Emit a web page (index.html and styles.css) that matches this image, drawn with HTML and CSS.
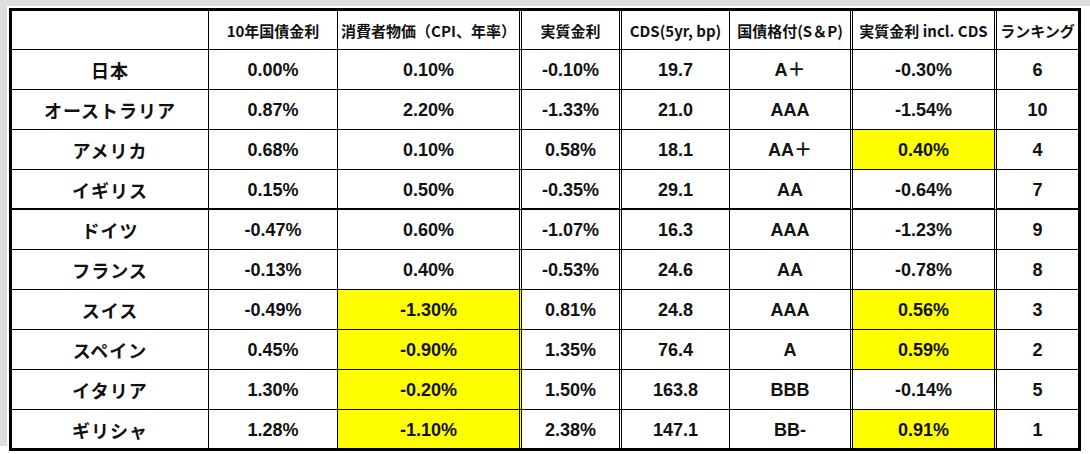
FILE: index.html
```html
<!DOCTYPE html>
<html lang="ja">
<head>
<meta charset="utf-8">
<title>実質金利比較</title>
<link rel="stylesheet" href="styles.css">
</head>
<body>
<div class="frame">
  <div class="sheet">
    <div class="cell hd"></div>
    <div class="cell hd">10年国債金利</div>
    <div class="cell hd dbl">消費者物価（CPI、年率）</div>
    <div class="cell hd dbl">実質金利</div>
    <div class="cell hd">CDS(5yr, bp)</div>
    <div class="cell hd dbl">国債格付(S＆P)</div>
    <div class="cell hd dbl">実質金利 incl. CDS</div>
    <div class="cell hd end">ランキング</div>

    <div class="cell name">日本</div>
    <div class="cell">0.00%</div>
    <div class="cell dbl">0.10%</div>
    <div class="cell dbl">-0.10%</div>
    <div class="cell">19.7</div>
    <div class="cell dbl">A＋</div>
    <div class="cell dbl">-0.30%</div>
    <div class="cell end">6</div>

    <div class="cell name">オーストラリア</div>
    <div class="cell">0.87%</div>
    <div class="cell dbl">2.20%</div>
    <div class="cell dbl">-1.33%</div>
    <div class="cell">21.0</div>
    <div class="cell dbl">AAA</div>
    <div class="cell dbl">-1.54%</div>
    <div class="cell end">10</div>

    <div class="cell name">アメリカ</div>
    <div class="cell">0.68%</div>
    <div class="cell dbl">0.10%</div>
    <div class="cell dbl">0.58%</div>
    <div class="cell">18.1</div>
    <div class="cell dbl">AA＋</div>
    <div class="cell dbl yl">0.40%</div>
    <div class="cell end">4</div>

    <div class="cell name thick">イギリス</div>
    <div class="cell thick">0.15%</div>
    <div class="cell dbl thick">0.50%</div>
    <div class="cell dbl thick">-0.35%</div>
    <div class="cell thick">29.1</div>
    <div class="cell dbl thick">AA</div>
    <div class="cell dbl thick">-0.64%</div>
    <div class="cell end thick">7</div>

    <div class="cell name">ドイツ</div>
    <div class="cell">-0.47%</div>
    <div class="cell dbl">0.60%</div>
    <div class="cell dbl">-1.07%</div>
    <div class="cell">16.3</div>
    <div class="cell dbl">AAA</div>
    <div class="cell dbl">-1.23%</div>
    <div class="cell end">9</div>

    <div class="cell name">フランス</div>
    <div class="cell">-0.13%</div>
    <div class="cell dbl">0.40%</div>
    <div class="cell dbl">-0.53%</div>
    <div class="cell">24.6</div>
    <div class="cell dbl">AA</div>
    <div class="cell dbl">-0.78%</div>
    <div class="cell end">8</div>

    <div class="cell name">スイス</div>
    <div class="cell">-0.49%</div>
    <div class="cell dbl yl">-1.30%</div>
    <div class="cell dbl">0.81%</div>
    <div class="cell">24.8</div>
    <div class="cell dbl">AAA</div>
    <div class="cell dbl yl">0.56%</div>
    <div class="cell end">3</div>

    <div class="cell name">スペイン</div>
    <div class="cell">0.45%</div>
    <div class="cell dbl yl">-0.90%</div>
    <div class="cell dbl">1.35%</div>
    <div class="cell">76.4</div>
    <div class="cell dbl">A</div>
    <div class="cell dbl yl">0.59%</div>
    <div class="cell end">2</div>

    <div class="cell name">イタリア</div>
    <div class="cell">1.30%</div>
    <div class="cell dbl yl">-0.20%</div>
    <div class="cell dbl">1.50%</div>
    <div class="cell">163.8</div>
    <div class="cell dbl">BBB</div>
    <div class="cell dbl">-0.14%</div>
    <div class="cell end">5</div>

    <div class="cell name last">ギリシャ</div>
    <div class="cell last">1.28%</div>
    <div class="cell dbl yl last">-1.10%</div>
    <div class="cell dbl last">2.38%</div>
    <div class="cell last">147.1</div>
    <div class="cell dbl last">BB-</div>
    <div class="cell dbl yl last">0.91%</div>
    <div class="cell end last">1</div>
  </div>
</div>
</body>
</html>
```
FILE: styles.css
```css
html, body {
  margin: 0;
  padding: 0;
  background: #ffffff;
}

body {
  width: 1090px;
  height: 454px;
  overflow: hidden;
  font-family: "Liberation Sans", "Noto Sans CJK JP", sans-serif;
  font-weight: bold;
  color: #111111;
}

.frame {
  border-top: 6px solid #dddddd;
  border-left: 7px solid #dddddd;
  padding: 2px 0 0 2px;
  height: 446px;
  box-sizing: border-box;
}

.sheet {
  display: grid;
  grid-template-columns: 197px 129px 184px 100px 108px 123px 144px 81px;
  grid-template-rows: 39px repeat(9, 40px) 38px;
  width: 1072px;
  border: 3px solid #000000;
  box-sizing: border-box;
  background: #ffffff;
}

.cell {
  box-sizing: border-box;
  display: flex;
  align-items: center;
  justify-content: center;
  border-right: 1px solid #000000;
  border-bottom: 1px solid #000000;
  font-size: 18px;
  white-space: nowrap;
  line-height: 1;
  padding-top: 1px;
}

.hd {
  font-size: 15px;
  font-family: "Noto Sans CJK JP", "Liberation Sans", sans-serif;
  font-weight: bold;
}

.name {
  font-family: "Noto Sans CJK JP", sans-serif;
  font-size: 18px;
  letter-spacing: 1px;
}

.dbl {
  border-right: 3px double #000000;
}

.end {
  border-right: none;
}

.thick {
  border-bottom-width: 2px;
}

.last {
  border-bottom: none;
}

.yl {
  background: #ffff00;
}
```
